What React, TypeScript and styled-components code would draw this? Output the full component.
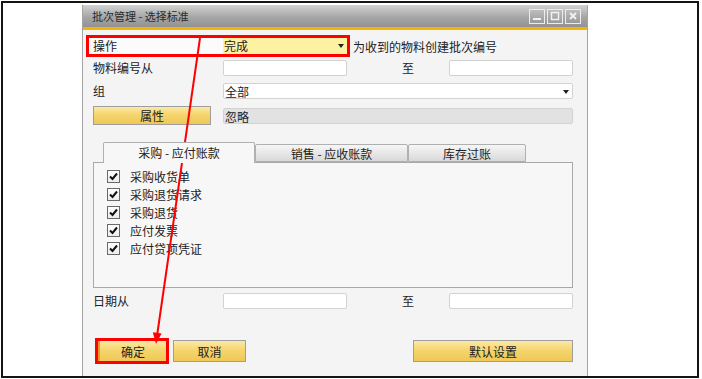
import React, { FC } from 'react'
import styled, { createGlobalStyle } from 'styled-components'

const GlobalStyle = createGlobalStyle`
  html, body {
    margin: 0;
    padding: 0;
    background: #fff;
  }

  body {
    font-family: "Noto Sans CJK SC", "Noto Sans", sans-serif;
    font-size: 12px;
    color: #222;
  }
`

const docs = ['采购收货单', '采购退货请求', '采购退货', '应付发票', '应付贷项凭证']

const App: FC = () => {
  return (
    <>
      <GlobalStyle />
      <Frame>
        <Window>
          <TitleBar>
            <Title>批次管理 - 选择标准</Title>
            <Controls>
              <Control>
                <svg width='10' height='10' viewBox='0 0 10 10'>
                  <rect x='1' y='7' width='8' height='2' fill='#f2f2f2' />
                </svg>
              </Control>
              <Control>
                <svg width='10' height='10' viewBox='0 0 10 10'>
                  <rect x='1.5' y='1.5' width='7' height='7' fill='none' stroke='#f2f2f2' strokeWidth='1.4' />
                </svg>
              </Control>
              <Control>
                <svg width='10' height='10' viewBox='0 0 10 10'>
                  <path d='M2 2 L8 8 M8 2 L2 8' stroke='#f2f2f2' strokeWidth='1.8' />
                </svg>
              </Control>
            </Controls>
          </TitleBar>
          <AccentBar />

          <Body>
            <ActionRow>
              <Highlight>
                <ActionLabel>操作</ActionLabel>
                <Field $tone='yellow' $width={124}>
                  完成
                  <Caret />
                </Field>
              </Highlight>
              <Hint>为收到的物料创建批次编号</Hint>
            </ActionRow>

            <FieldGrid>
              <Label>物料编号从</Label>
              <Field $width={124} />
              <ToLabel>至</ToLabel>
              <Field $width={124} />

              <Label>组</Label>
              <Field $span>
                全部
                <Caret />
              </Field>

              <PropButton>属性</PropButton>
              <Field $tone='gray' $span $height={16}>
                忽略
              </Field>
            </FieldGrid>

            <Tabs>
              <TabStrip>
                <Tab $active $width={152}>采购 - 应付账款</Tab>
                <Tab $width={153}>销售 - 应收账款</Tab>
                <Tab $width={118}>库存过账</Tab>
              </TabStrip>
              <Panel>
                {docs.map(doc => (
                  <CheckRow key={doc}>
                    <CheckBox>
                      <svg width='11' height='11' viewBox='0 0 11 11'>
                        <path d='M2 5.5 L4.5 8 L9 2.5' fill='none' stroke='#111' strokeWidth='2' />
                      </svg>
                    </CheckBox>
                    {doc}
                  </CheckRow>
                ))}
              </Panel>
            </Tabs>

            <DateGrid>
              <Label>日期从</Label>
              <Field $width={124} />
              <ToLabel>至</ToLabel>
              <Field $width={124} />
            </DateGrid>

            <ButtonRow>
              <Button $width={70} $focused>确定</Button>
              <Button $width={73}>取消</Button>
              <Button $width={160} $push>默认设置</Button>
            </ButtonRow>
          </Body>
        </Window>

        <Arrow width='702' height='379' viewBox='0 0 702 379'>
          <line x1='200' y1='38' x2='157.3' y2='334' stroke='#f00' strokeWidth='2' />
          <polygon points='156,344 161.6,333.5 152.8,332.3' fill='#f00' />
        </Arrow>
      </Frame>
    </>
  )
}

export default App

const Frame = styled.div`
  position: relative;
  box-sizing: border-box;
  overflow: hidden;

  width: 698px;
  height: 377px;
  margin: 1px 0 0 1px;
  padding: 2px 0 0 79px;

  background: #fff;
  border: 2px solid #151515;
`

const Window = styled.div`
  box-sizing: border-box;

  width: 506px;
  height: 400px;

  background: #f4f4f4;
  border-left: 1px solid #a4a4a4;
  border-right: 1px solid #a4a4a4;
`

const TitleBar = styled.div`
  display: flex;
  align-items: center;

  height: 22px;
  padding: 0 6px 0 9px;

  background: linear-gradient(#d2d2d2, #a6a6a6 55%, #929292);
`

const Title = styled.span`
  font-size: 11px;
  color: #2a2a2a;
`

const Controls = styled.div`
  display: flex;
  gap: 2px;

  margin-left: auto;
`

const Control = styled.div`
  box-sizing: border-box;
  display: flex;
  align-items: center;
  justify-content: center;

  width: 16px;
  height: 15px;

  background: linear-gradient(#bdbdbd, #9a9a9a);
  border: 1px solid #ececec;
`

const AccentBar = styled.div`
  height: 3px;
  background: #f4b400;
`

const Body = styled.div`
  padding: 5px 14px 0 3px;
`

const ActionRow = styled.div`
  display: flex;
  align-items: center;
`

const Highlight = styled.div`
  display: flex;

  border: 3px solid #f00;
`

const ActionLabel = styled.div`
  width: 130px;
  height: 16px;
  padding-left: 4px;

  line-height: 16px;
  background: #fbfbfb;
`

const Hint = styled.span`
  margin-left: 3px;
`

const Field = styled.div<{ $tone?: 'yellow' | 'gray'; $width?: number; $span?: boolean; $height?: number }>`
  position: relative;
  box-sizing: border-box;
  align-self: center;

  width: ${p => (p.$width ? `${p.$width}px` : 'auto')};
  height: ${p => p.$height ?? 16}px;
  padding-left: 1px;
  grid-column: ${p => (p.$span ? '2 / 5' : 'auto')};

  line-height: 15px;
  background: ${p => (p.$tone === 'yellow' ? '#fdf1a2' : p.$tone === 'gray' ? '#e2e2e2' : '#fff')};
  border: ${p => (p.$tone === 'yellow' ? 'none' : '1px solid #d2d2d2')};
  border-radius: ${p => (p.$tone === 'yellow' ? '0' : '2px')};
`

const Caret = styled.span`
  position: absolute;
  top: 6px;
  right: 3px;

  border-top: 4px solid #222;
  border-left: 3px solid transparent;
  border-right: 3px solid transparent;
`

const FieldGrid = styled.div`
  display: grid;
  grid-template-columns: 130px 124px 102px 124px;
  grid-template-rows: 16px 16px 19px;
  row-gap: 7px;

  margin-top: 3px;
  padding-left: 7px;
`

const Label = styled.div`
  line-height: 16px;
`

const ToLabel = styled.div`
  padding-left: 55px;

  line-height: 16px;
`

const Button = styled.div<{ $width: number; $focused?: boolean; $push?: boolean }>`
  box-sizing: border-box;
  display: flex;
  align-items: center;
  justify-content: center;

  width: ${p => p.$width}px;
  height: 22px;
  margin-left: ${p => (p.$push ? 'auto' : '0')};

  color: #222;
  background: linear-gradient(#fbe9a6, #f5d56e 45%, #efc856);
  border: 1px solid #9e9e9e;
  border-left: ${p => (p.$focused ? '3px solid #ef9a1a' : '1px solid #9e9e9e')};
  outline: ${p => (p.$focused ? '3px solid #f00' : 'none')};
  outline-offset: -1px;
`

const PropButton = styled(Button).attrs({ $width: 118 })`
  height: 19px;
`

const Tabs = styled.div`
  margin-top: 17px;
  padding-left: 7px;
`

const TabStrip = styled.div`
  display: flex;
  align-items: flex-end;

  height: 20px;
  padding-left: 10px;
`

const Tab = styled.div<{ $active?: boolean; $width: number }>`
  position: relative;
  z-index: ${p => (p.$active ? 1 : 0)};
  box-sizing: border-box;
  display: flex;
  align-items: center;
  justify-content: center;

  width: ${p => p.$width}px;
  height: ${p => (p.$active ? 21 : 18)}px;
  margin-bottom: ${p => (p.$active ? -1 : 0)}px;
  padding-bottom: ${p => (p.$active ? 2 : 0)}px;

  background: ${p => (p.$active ? '#f7f7f7' : 'linear-gradient(#f6f6f6, #d9d9d9)')};
  border: 1px solid #b0b0b0;
  border-bottom: ${p => (p.$active ? 'none' : '1px solid #b0b0b0')};
  border-radius: 2px 2px 0 0;
`

const Panel = styled.div`
  box-sizing: border-box;

  width: 480px;
  height: 126px;
  padding: 4px 0 0 13px;

  background: #f7f7f7;
  border: 1px solid #a8a8a8;
`

const CheckRow = styled.div`
  display: flex;
  align-items: center;
  gap: 10px;

  height: 18px;
`

const CheckBox = styled.div`
  box-sizing: border-box;
  display: flex;
  align-items: center;
  justify-content: center;

  width: 13px;
  height: 13px;

  background: linear-gradient(#fff, #ececec);
  border: 1px solid #6a6a6a;
`

const DateGrid = styled.div`
  display: grid;
  grid-template-columns: 130px 124px 102px 124px;
  grid-template-rows: 16px;

  margin-top: 5px;
  padding-left: 7px;
`

const ButtonRow = styled.div`
  display: flex;
  gap: 6px;

  margin-top: 31px;
  padding-left: 11px;
`

const Arrow = styled.svg`
  position: absolute;
  top: -3px;
  left: -3px;

  pointer-events: none;
`
